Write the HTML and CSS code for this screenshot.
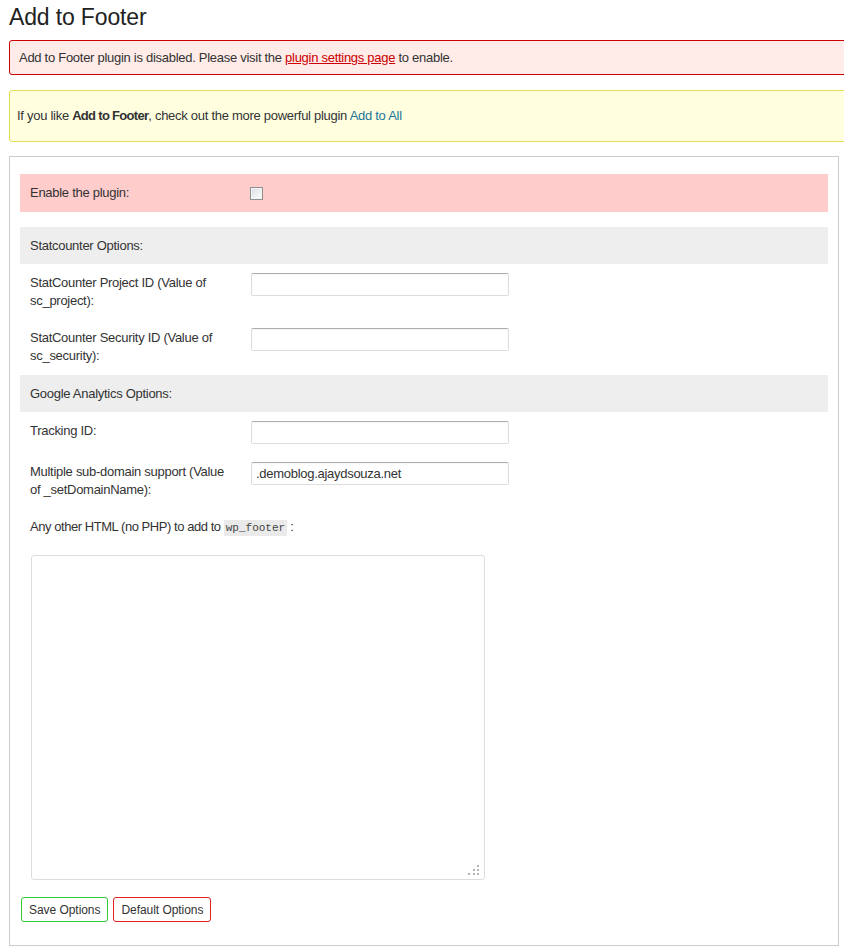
FILE: index.html
```html
<!DOCTYPE html>
<html lang="en">
<head>
<meta charset="utf-8">
<title>Add to Footer</title>
<link rel="stylesheet" href="styles.css">
</head>
<body>
<div class="wrap">
  <h1 class="page-title">Add to Footer</h1>
  <div class="notice notice-error">
    <p>Add to Footer plugin is disabled. Please visit the <a class="err-link" href="#">plugin settings page</a> to enable.</p>
  </div>
  <div class="notice notice-updated">
    <p>If you like <strong class="strong">Add to Footer</strong>, check out the more powerful plugin <a class="info-link" href="#">Add to All</a></p>
  </div>
  <form class="panel">
    <div class="row-enable">
      <label class="th" for="enable">Enable the plugin:</label>
      <div class="td-check"><input class="check" type="checkbox" id="enable"></div>
    </div>

    <div class="section-head section-first">Statcounter Options:</div>
    <div class="row">
      <label class="th" for="sc_project">StatCounter Project ID (Value of sc_project):</label>
      <div class="td"><input class="text" type="text" id="sc_project"></div>
    </div>
    <div class="row">
      <label class="th" for="sc_security">StatCounter Security ID (Value of sc_security):</label>
      <div class="td"><input class="text" type="text" id="sc_security"></div>
    </div>

    <div class="section-head">Google Analytics Options:</div>
    <div class="row">
      <label class="th" for="ga_id">Tracking ID:</label>
      <div class="td"><input class="text" type="text" id="ga_id"></div>
    </div>
    <div class="row">
      <label class="th" for="ga_domain">Multiple sub-domain support (Value of _setDomainName):</label>
      <div class="td"><input class="text" type="text" id="ga_domain" value=".demoblog.ajaydsouza.net"></div>
    </div>

    <div class="html-block">
      <label class="html-label" for="other_html">Any other HTML (no PHP) to add to <code class="code">wp_footer</code> :</label>
      <div class="area-wrap">
        <textarea class="area" id="other_html"></textarea>
        <svg class="grip" width="11" height="10" viewBox="0 0 11 10" aria-hidden="true">
          <rect x="9" y="0" width="2" height="2" fill="#b4b4b4"/>
          <rect x="5" y="4" width="2" height="2" fill="#b4b4b4"/>
          <rect x="9" y="4" width="2" height="2" fill="#b4b4b4"/>
          <rect x="0" y="8" width="2" height="2" fill="#b4b4b4"/>
          <rect x="5" y="8" width="2" height="2" fill="#b4b4b4"/>
          <rect x="9" y="8" width="2" height="2" fill="#b4b4b4"/>
        </svg>
      </div>
    </div>

    <div class="actions">
      <button type="button" class="btn btn-save">Save Options</button>
      <button type="button" class="btn btn-default">Default Options</button>
    </div>
  </form>
</div>
</body>
</html>
```
FILE: styles.css
```css
html, body {
  margin: 0;
  padding: 0;
  overflow: hidden;
  background: #fff;
}

body {
  font-family: "Liberation Sans", Arial, sans-serif;
  font-size: 13px;
  letter-spacing: -0.28px;
  color: #333;
}

.wrap {
  padding-left: 9px;
}

.page-title {
  margin: 0;
  padding-top: 2px;
  font-size: 23px;
  line-height: 30px;
  font-weight: normal;
  letter-spacing: -0.15px;
  color: #222;
}

.notice {
  margin-right: -40px;
  border: 1px solid;
  border-radius: 3px;
}

.notice p {
  margin: 0;
  line-height: 17px;
}

.notice-error {
  margin-top: 8px;
  padding: 8px 9px;
  background: #ffebe8;
  border-color: #cc0000;
}

.notice-updated {
  margin-top: 15px;
  padding: 16px 7px 17px;
  background: #ffffe0;
  border-color: #e6db55;
}

.strong {
  letter-spacing: -0.7px;
}

.err-link {
  color: #cc0000;
  text-decoration: underline;
}

.info-link {
  color: #21759b;
  text-decoration: none;
}

.panel {
  margin-top: 14px;
  width: 830px;
  box-sizing: border-box;
  border: 1px solid #cccccc;
  padding: 17px 10px 23px;
}

.row {
  display: grid;
  grid-template-columns: 220px 1fr;
  align-items: start;
}

.th {
  padding: 10px 10px 9px;
  line-height: 18px;
}

.td {
  padding: 9px 10px 9px 11px;
}

.row-enable {
  display: grid;
  grid-template-columns: 220px 1fr;
  align-items: center;
  height: 38px;
  background: #ffcccc;
}

.row-enable .th {
  padding: 0 10px;
}

.td-check {
  padding: 0 10px;
  display: flex;
  align-items: center;
}

.check {
  appearance: none;
  -webkit-appearance: none;
  margin: 0;
  width: 13px;
  height: 13px;
  box-sizing: border-box;
  border: 1px solid #8e8f8f;
  box-shadow: inset 0 0 0 1px #f3f3f3;
  background: linear-gradient(135deg, #d8dbe0 0%, #eef0f2 55%, #ffffff 100%);
}

.section-head {
  margin-top: 1px;
  padding: 10px;
  line-height: 17px;
  background: #eeeeee;
}

.section-first {
  margin-top: 15px;
}

.text {
  display: block;
  margin: 0;
  width: 258px;
  height: 23px;
  box-sizing: border-box;
  padding: 0 4px;
  border: 1px solid #dddddd;
  border-top-color: #acacac;
  border-radius: 2px;
  box-shadow: inset 0 1px 2px rgba(0, 0, 0, 0.04);
  font-family: "Liberation Sans", Arial, sans-serif;
  font-size: 13px;
  letter-spacing: -0.28px;
  color: #333;
  background: #fff;
  outline: none;
}

.html-block {
  padding: 10px 10px 0;
}

.html-label {
  display: block;
  line-height: 18px;
  letter-spacing: -0.45px;
}

.code {
  font-family: "Liberation Mono", "DejaVu Sans Mono", monospace;
  font-size: 11px;
  letter-spacing: 0;
  padding: 2px 2px;
  background: #eaeaea;
  color: #444;
}

.area-wrap {
  position: relative;
  margin: 18px 0 0 1px;
  width: 454px;
  height: 325px;
}

.area {
  display: block;
  margin: 0;
  width: 454px;
  height: 325px;
  box-sizing: border-box;
  border: 1px solid #dddddd;
  border-radius: 3px;
  background: #fff;
  outline: none;
  resize: none;
}

.grip {
  position: absolute;
  right: 6px;
  bottom: 5px;
}

.actions {
  margin-top: 17px;
  padding-left: 1px;
  display: flex;
  gap: 5px;
}

.btn {
  margin: 0;
  height: 25px;
  padding: 0 7px;
  background: #fff;
  border: 1px solid;
  border-radius: 3px;
  font-family: "Liberation Sans", Arial, sans-serif;
  font-size: 12px;
  letter-spacing: -0.05px;
  color: #333;
  cursor: pointer;
}

.btn-save {
  border-color: #33cc33;
}

.btn-default {
  border-color: #e61e1e;
}
```
